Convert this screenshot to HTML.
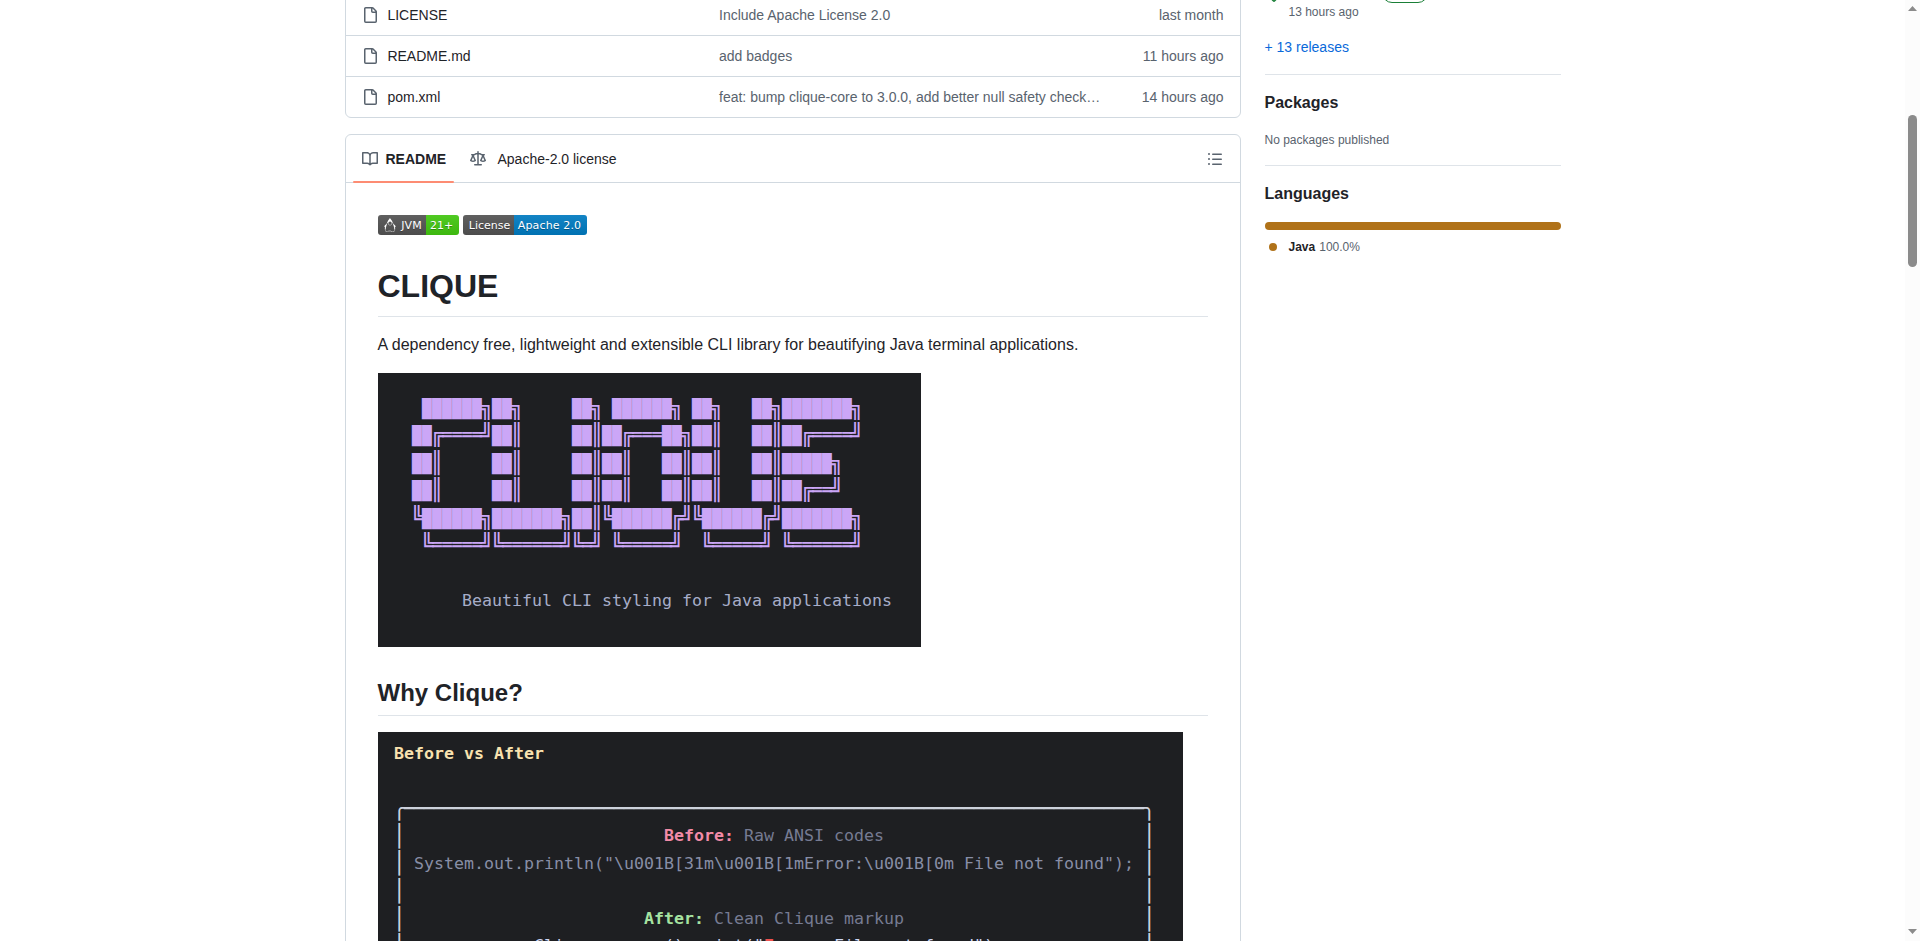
<!DOCTYPE html>
<html lang="en">
<head>
<meta charset="utf-8">
<title>clique</title>
<style>
html,body{margin:0;padding:0;background:#fff;overflow:hidden;}
body{width:1920px;height:941px;position:relative;font-family:"Liberation Sans",sans-serif;font-size:14px;color:#1f2328;line-height:20px;}
.abs{position:absolute;}
.muted{color:#59636e;}
/* file list */
#files{left:345px;top:-7px;width:894px;height:123px;border:1px solid #d1d9e0;border-radius:0 0 6px 6px;box-sizing:content-box;}
.frow{position:absolute;left:0;width:894px;height:40px;border-top:1px solid #d1d9e0;}
.frow svg{position:absolute;left:16px;top:12px;fill:#59636e;}
.frow .fn{position:absolute;left:41.4px;top:10px;white-space:nowrap;}
.frow .cm{position:absolute;left:373px;top:10px;color:#59636e;white-space:nowrap;}
.frow .dt{position:absolute;right:16.5px;top:10px;color:#59636e;white-space:nowrap;}
/* readme box */
#readme{left:345px;top:134px;width:894px;height:900px;border:1px solid #d1d9e0;border-radius:6px 6px 0 0;}
#rhead{left:0;top:0;width:894px;height:47px;border-bottom:1px solid #d1d9e0;}
.tab{position:absolute;top:14px;white-space:nowrap;font-size:14px;line-height:20px;}
h1,h2,p{margin:0;}
.badge{height:20px;border-radius:3px;overflow:hidden;font-family:"DejaVu Sans",sans-serif;font-size:11px;line-height:20px;color:#fff;}
.badge .bl{position:absolute;top:0;height:20px;}
.badge .sh{background:linear-gradient(rgba(187,187,187,.1),rgba(0,0,0,.1));}
.badge .bt{position:absolute;top:1px;text-align:center;white-space:nowrap;text-shadow:0 1px 0 rgba(1,1,1,.3);}
</style>
</head>
<body>
<!-- file list -->
<div id="files" class="abs">
  <div class="frow" style="top:0px">
    <svg width="16" height="16" viewBox="0 0 16 16"><path d="M2 1.75C2 .784 2.784 0 3.75 0h6.586c.464 0 .909.184 1.237.513l2.914 2.914c.329.328.513.773.513 1.237v9.586A1.75 1.75 0 0 1 13.25 16h-9.5A1.75 1.75 0 0 1 2 14.25Zm1.75-.25a.25.25 0 0 0-.25.25v12.5c0 .138.112.25.25.25h9.5a.25.25 0 0 0 .25-.25V6h-2.75A1.75 1.75 0 0 1 9 4.25V1.5Zm6.75.062V4.25c0 .138.112.25.25.25h2.688l-.011-.013-2.914-2.914-.013-.011Z"/></svg>
    <span class="fn">LICENSE</span><span class="cm">Include Apache License 2.0</span><span class="dt">last month</span>
  </div>
  <div class="frow" style="top:41px">
    <svg width="16" height="16" viewBox="0 0 16 16"><path d="M2 1.75C2 .784 2.784 0 3.75 0h6.586c.464 0 .909.184 1.237.513l2.914 2.914c.329.328.513.773.513 1.237v9.586A1.75 1.75 0 0 1 13.25 16h-9.5A1.75 1.75 0 0 1 2 14.25Zm1.75-.25a.25.25 0 0 0-.25.25v12.5c0 .138.112.25.25.25h9.5a.25.25 0 0 0 .25-.25V6h-2.75A1.75 1.75 0 0 1 9 4.25V1.5Zm6.75.062V4.25c0 .138.112.25.25.25h2.688l-.011-.013-2.914-2.914-.013-.011Z"/></svg>
    <span class="fn">README.md</span><span class="cm">add badges</span><span class="dt">11 hours ago</span>
  </div>
  <div class="frow" style="top:82px">
    <svg width="16" height="16" viewBox="0 0 16 16"><path d="M2 1.75C2 .784 2.784 0 3.75 0h6.586c.464 0 .909.184 1.237.513l2.914 2.914c.329.328.513.773.513 1.237v9.586A1.75 1.75 0 0 1 13.25 16h-9.5A1.75 1.75 0 0 1 2 14.25Zm1.75-.25a.25.25 0 0 0-.25.25v12.5c0 .138.112.25.25.25h9.5a.25.25 0 0 0 .25-.25V6h-2.75A1.75 1.75 0 0 1 9 4.25V1.5Zm6.75.062V4.25c0 .138.112.25.25.25h2.688l-.011-.013-2.914-2.914-.013-.011Z"/></svg>
    <span class="fn">pom.xml</span><span class="cm">feat: bump clique-core to 3.0.0, add better null safety check…</span><span class="dt">14 hours ago</span>
  </div>
</div>

<!-- readme box -->
<div id="readme" class="abs">
  <div id="rhead" class="abs">
    <svg class="abs" style="left:16px;top:16px;fill:#59636e" width="16" height="16" viewBox="0 0 16 16"><path d="M0 1.75A.75.75 0 0 1 .75 1h4.253c1.227 0 2.317.59 3 1.501A3.743 3.743 0 0 1 11.006 1h4.245a.75.75 0 0 1 .75.75v10.5a.75.75 0 0 1-.75.75h-4.507a2.25 2.25 0 0 0-1.591.659l-.622.621a.75.75 0 0 1-1.06 0l-.622-.621A2.25 2.25 0 0 0 5.258 13H.75a.75.75 0 0 1-.75-.75Zm7.251 10.324.004-5.073-.002-2.253A2.25 2.25 0 0 0 5.003 2.5H1.5v9h3.757a3.75 3.75 0 0 1 1.994.574ZM8.755 4.75l-.004 7.322a3.752 3.752 0 0 1 1.992-.572H14.5v-9h-3.495a2.25 2.25 0 0 0-2.25 2.25Z"/></svg>
    <span class="tab" style="left:39.5px;font-weight:bold;">README</span>
    <div class="abs" style="left:7px;top:46px;width:101px;height:2px;background:#fd8c73;border-radius:1px;"></div>
    <svg class="abs" style="left:124px;top:16px;fill:#59636e" width="16" height="16" viewBox="0 0 16 16"><path d="M8.75.75V2h.985c.304 0 .603.08.867.231l1.29.736c.038.022.08.033.124.033h2.234a.75.75 0 0 1 0 1.500h-.427l2.111 4.692a.75.75 0 0 1-.154.838l-.53-.53.529.531-.001.002-.002.002-.006.006-.006.005-.01.01-.045.040c-.21.176-.441.327-.686.450C14.556 10.780 13.880 11 13 11a4.498 4.498 0 0 1-2.023-.454 3.544 3.544 0 0 1-.686-.450l-.045-.040-.016-.015-.006-.006-.004-.004v-.001a.75.75 0 0 1-.154-.838L12.178 4.500h-.162c-.305 0-.604-.079-.868-.231l-1.290-.736a.245.245 0 0 0-.124-.033H8.750V13h2.500a.75.75 0 0 1 0 1.500h-6.500a.75.75 0 0 1 0-1.500h2.500V3.500h-.984a.245.245 0 0 0-.124.033l-1.289.737c-.265.150-.564.230-.869.230h-.162l2.112 4.692a.75.75 0 0 1-.154.838l-.530-.530.529.531-.001.002-.002.002-.006.006-.016.015-.045.040c-.21.176-.441.327-.686.450C4.556 10.780 3.880 11 3 11a4.498 4.498 0 0 1-2.023-.454 3.544 3.544 0 0 1-.686-.450l-.045-.040-.016-.015-.006-.006-.004-.004v-.001a.75.75 0 0 1-.154-.838L2.178 4.500H1.750a.75.75 0 0 1 0-1.500h2.234a.249.249 0 0 0 .125-.033l1.288-.737c.265-.150.564-.230.869-.230h.984V.750a.75.75 0 0 1 1.500 0Zm2.945 8.477c.285.135.718.273 1.305.273s1.020-.138 1.305-.273L13 6.327Zm-10 0c.285.135.718.273 1.305.273s1.020-.138 1.305-.273L3 6.327Z"/></svg>
    <span class="tab" style="left:151.5px;">Apache-2.0 license</span>
    <svg class="abs" style="left:861px;top:16px;fill:#59636e" width="16" height="16" viewBox="0 0 16 16"><path d="M5.75 2.5h8.5a.75.75 0 0 1 0 1.5h-8.5a.75.75 0 0 1 0-1.5Zm0 5h8.5a.75.75 0 0 1 0 1.5h-8.5a.75.75 0 0 1 0-1.5Zm0 5h8.5a.75.75 0 0 1 0 1.5h-8.5a.75.75 0 0 1 0-1.5ZM2 14a1 1 0 1 1 0-2 1 1 0 0 1 0 2Zm1-6a1 1 0 1 1-2 0 1 1 0 0 1 2 0ZM2 4a1 1 0 1 1 0-2 1 1 0 0 1 0 2Z"/></svg>
  </div>
</div>

<!-- readme content (absolute page coords) -->
<h1 class="abs" style="left:377.5px;top:266px;font-size:32px;line-height:40px;font-weight:bold;white-space:nowrap;">CLIQUE</h1>
<div class="abs" style="left:378px;top:316px;width:830px;height:1px;background:#d1d9e0b3;"></div>
<p class="abs" style="left:377.5px;top:333px;font-size:16px;line-height:24px;white-space:nowrap;">A dependency free, lightweight and extensible CLI library for beautifying Java terminal applications.</p>
<h2 class="abs" style="left:377.5px;top:678px;font-size:24px;line-height:30px;font-weight:bold;white-space:nowrap;">Why Clique?</h2>
<div class="abs" style="left:378px;top:715px;width:830px;height:1px;background:#d1d9e0b3;"></div>

<!-- sidebar -->
<svg class="abs" style="left:1265px;top:-14px;fill:#1a7f37" width="16" height="16" viewBox="0 0 16 16"><path d="M1 7.775V2.75C1 1.784 1.784 1 2.75 1h5.025c.464 0 .910.184 1.238.513l6.250 6.250a1.750 1.750 0 0 1 0 2.474l-5.026 5.026a1.750 1.750 0 0 1-2.474 0l-6.250-6.250A1.752 1.752 0 0 1 1 7.775Zm1.500 0c0 .066.026.130.073.177l6.250 6.250a.250.250 0 0 0 .354 0l5.025-5.025a.250.250 0 0 0 0-.354l-6.250-6.250a.250.250 0 0 0-.177-.073H2.750a.250.250 0 0 0-.250.250ZM6 5a1 1 0 1 1 0 2 1 1 0 0 1 0-2Z"/></svg>
<div class="abs" style="left:1382px;top:-18px;width:44px;height:19px;border:1px solid #1a7f37;border-radius:10px;"></div>
<div class="abs muted" style="left:1288.5px;top:3px;font-size:12px;line-height:18px;white-space:nowrap;">13 hours ago</div>
<div class="abs" style="left:1264.5px;top:37px;font-size:14px;line-height:20px;color:#0969da;white-space:nowrap;">+ 13 releases</div>
<div class="abs" style="left:1265px;top:74px;width:296px;height:1px;background:#d1d9e0b3;"></div>
<div class="abs" style="left:1264.5px;top:91px;font-size:16px;line-height:24px;font-weight:bold;white-space:nowrap;">Packages</div>
<div class="abs muted" style="left:1264.5px;top:131px;font-size:12px;line-height:18px;white-space:nowrap;">No packages published</div>
<div class="abs" style="left:1265px;top:165px;width:296px;height:1px;background:#d1d9e0b3;"></div>
<div class="abs" style="left:1264.5px;top:182px;font-size:16px;line-height:24px;font-weight:bold;white-space:nowrap;">Languages</div>
<div class="abs" style="left:1265px;top:222px;width:296px;height:8px;background:#b07219;border-radius:6px;"></div>
<div class="abs" style="left:1269px;top:243px;width:8px;height:8px;background:#b07219;border-radius:50%;"></div>
<div class="abs" style="left:1288.5px;top:238px;font-size:12px;line-height:18px;white-space:nowrap;"><b style="margin-right:4px">Java</b><span class="muted">100.0%</span></div>

<!-- scrollbar -->
<div class="abs" style="left:1905px;top:0;width:15px;height:941px;background:#fcfcfc;"></div>
<div class="abs" style="left:1908px;top:115px;width:9px;height:152px;background:#8b8b8b;border-radius:4.5px;"></div>
<svg class="abs" style="left:1905px;top:0" width="15" height="941" viewBox="0 0 15 941"><path d="M3 11 L7.5 6 L12 11Z M3 929 L7.5 934 L12 929Z" fill="#8b8b8b"/></svg>
<!-- badges -->
<div class="abs badge" style="left:378px;top:215px;width:81px;">
  <span class="bl" style="left:0;width:48px;background:#555"></span><span class="bl" style="left:48px;width:33px;background:#4c1"></span><span class="bl sh" style="left:0;width:81px;"></span>
  <svg class="abs" style="left:5px;top:3px;fill:#fff" width="14" height="14" viewBox="0 0 24 24"><path d="M11.915 0 11.7.215C9.515 2.4 7.47 6.39 6.046 10.483c-1.064 1.024-3.633 2.81-3.711 3.551-.093.87 1.746 2.611 1.55 3.235-.198.625-1.304 1.408-1.014 1.939.1.188.823.011 1.277-.491a13.389 13.389 0 0 0-.017 2.14c.076.906.27 1.668.643 2.232.372.563.956.911 1.667.911.397 0 .727-.114 1.024-.264.298-.149.571-.33.91-.5.68-.34 1.634-.666 3.53-.604 1.903.062 2.872.39 3.559.704.687.314 1.15.664 1.925.664.767 0 1.395-.336 1.807-.9.412-.563.631-1.33.72-2.24.06-.623.055-1.32 0-2.066.454.45 1.117.604 1.213.424.29-.53-.816-1.314-1.013-1.937-.198-.624 1.642-2.366 1.549-3.236-.08-.748-2.707-2.568-3.748-3.586C16.428 6.374 14.308 2.394 12.13.215zm.175 6.038a2.95 2.95 0 0 1 2.943 2.942 2.95 2.95 0 0 1-2.943 2.943A2.95 2.95 0 0 1 9.148 8.98a2.95 2.95 0 0 1 2.942-2.942zM8.685 7.983a3.515 3.515 0 0 0-.145.997c0 1.951 1.6 3.55 3.55 3.55 1.95 0 3.55-1.598 3.55-3.55 0-.329-.046-.648-.132-.951.334.095.64.208.915.336a42.699 42.699 0 0 1 2.042 5.829c.678 2.545 1.01 4.92.846 6.607-.082.844-.29 1.51-.606 1.94-.315.431-.713.651-1.315.651-.593 0-.932-.27-1.673-.61-.741-.338-1.825-.694-3.792-.758-1.974-.064-3.073.293-3.821.669-.375.188-.659.373-.911.5s-.466.2-.752.2c-.53 0-.878-.216-1.16-.643-.281-.427-.469-1.08-.539-1.903-.14-1.646.177-3.955.84-6.545a43.35 43.35 0 0 1 1.987-5.844c.31-.176.681-.336 1.116-.475z"/></svg>
  <span class="bt" style="left:22px;width:23px;">JVM</span><span class="bt" style="left:47px;width:33px;">21+</span>
</div>
<div class="abs badge" style="left:463px;top:215px;width:124px;">
  <span class="bl" style="left:0;width:51px;background:#555"></span><span class="bl" style="left:51px;width:73px;background:#007ec6"></span><span class="bl sh" style="left:0;width:124px;"></span>
  <span class="bt" style="left:0;width:53px;">License</span><span class="bt" style="left:51px;width:71px;letter-spacing:.13px;">Apache 2.0</span>
</div>
<svg class="abs" style="left:378px;top:373px" width="543" height="274" viewBox="0 0 543 274">
<rect width="543" height="274" fill="#1e1f22"/>
<g font-family="'DejaVu Sans Mono','Liberation Mono',monospace" fill="#cba6f7" xml:space="preserve">
<text transform="translate(0,35.40) scale(1,1.1092)" x="43.91 53.91 63.91 73.91 83.91 93.91" y="5.534" font-size="16.088">██████</text>
<text transform="translate(0,35.40) scale(1,1.1092)" x="113.91 123.91" y="5.534" font-size="16.088">██</text>
<text transform="translate(0,35.40) scale(1,1.1092)" x="193.91 203.91" y="5.534" font-size="16.088">██</text>
<text transform="translate(0,35.40) scale(1,1.1092)" x="233.91 243.91 253.91 263.91 273.91 283.91" y="5.534" font-size="16.088">██████</text>
<text transform="translate(0,35.40) scale(1,1.1092)" x="313.91 323.91" y="5.534" font-size="16.088">██</text>
<text transform="translate(0,35.40) scale(1,1.1092)" x="373.91 383.91" y="5.534" font-size="16.088">██</text>
<text transform="translate(0,35.40) scale(1,1.1092)" x="403.91 413.91 423.91 433.91 443.91 453.91 463.91" y="5.534" font-size="16.088">███████</text>
<text transform="translate(0,34.30) scale(1,0.9428)" x="102.00" y="7.771" font-size="22.589">╗</text>
<text transform="translate(0,34.30) scale(1,0.9428)" x="132.00" y="7.771" font-size="22.589">╗</text>
<text transform="translate(0,34.30) scale(1,0.9428)" x="212.00" y="7.771" font-size="22.589">╗</text>
<text transform="translate(0,34.30) scale(1,0.9428)" x="292.00" y="7.771" font-size="22.589">╗</text>
<text transform="translate(0,34.30) scale(1,0.9428)" x="332.00" y="7.771" font-size="22.589">╗</text>
<text transform="translate(0,34.30) scale(1,0.9428)" x="392.00" y="7.771" font-size="22.589">╗</text>
<text transform="translate(0,34.30) scale(1,0.9428)" x="472.00" y="7.771" font-size="22.589">╗</text>
<text transform="translate(0,62.40) scale(1,1.1092)" x="33.91 43.91" y="5.534" font-size="16.088">██</text>
<text transform="translate(0,62.40) scale(1,1.1092)" x="113.91 123.91" y="5.534" font-size="16.088">██</text>
<text transform="translate(0,62.40) scale(1,1.1092)" x="193.91 203.91" y="5.534" font-size="16.088">██</text>
<text transform="translate(0,62.40) scale(1,1.1092)" x="223.91 233.91" y="5.534" font-size="16.088">██</text>
<text transform="translate(0,62.40) scale(1,1.1092)" x="283.91 293.91" y="5.534" font-size="16.088">██</text>
<text transform="translate(0,62.40) scale(1,1.1092)" x="313.91 323.91" y="5.534" font-size="16.088">██</text>
<text transform="translate(0,62.40) scale(1,1.1092)" x="373.91 383.91" y="5.534" font-size="16.088">██</text>
<text transform="translate(0,62.40) scale(1,1.1092)" x="403.91 413.91" y="5.534" font-size="16.088">██</text>
<text transform="translate(0,61.30) scale(0.71219,0.9428)" x="90.084 104.125 118.167 132.208" y="7.771" font-size="22.589">════</text>
<text transform="translate(0,61.30) scale(0.71219,0.9428)" x="356.867 370.908 384.949" y="7.771" font-size="22.589">═══</text>
<text transform="translate(0,61.30) scale(0.71219,0.9428)" x="609.609 623.650 637.691 651.732" y="7.771" font-size="22.589">════</text>
<text transform="translate(0,61.30) scale(1,0.9428)" x="52.00" y="7.771" font-size="22.589">╔</text>
<text transform="translate(0,61.30) scale(1,0.9428)" x="102.00" y="7.771" font-size="22.589">╝</text>
<text transform="translate(0,61.30) scale(1,0.9428)" x="132.00" y="7.771" font-size="22.589">║</text>
<text transform="translate(0,61.30) scale(1,0.9428)" x="212.00" y="7.771" font-size="22.589">║</text>
<text transform="translate(0,61.30) scale(1,0.9428)" x="242.00" y="7.771" font-size="22.589">╔</text>
<text transform="translate(0,61.30) scale(1,0.9428)" x="302.00" y="7.771" font-size="22.589">╗</text>
<text transform="translate(0,61.30) scale(1,0.9428)" x="332.00" y="7.771" font-size="22.589">║</text>
<text transform="translate(0,61.30) scale(1,0.9428)" x="392.00" y="7.771" font-size="22.589">║</text>
<text transform="translate(0,61.30) scale(1,0.9428)" x="422.00" y="7.771" font-size="22.589">╔</text>
<text transform="translate(0,61.30) scale(1,0.9428)" x="472.00" y="7.771" font-size="22.589">╝</text>
<text transform="translate(0,90.40) scale(1,1.1092)" x="33.91 43.91" y="5.534" font-size="16.088">██</text>
<text transform="translate(0,90.40) scale(1,1.1092)" x="113.91 123.91" y="5.534" font-size="16.088">██</text>
<text transform="translate(0,90.40) scale(1,1.1092)" x="193.91 203.91" y="5.534" font-size="16.088">██</text>
<text transform="translate(0,90.40) scale(1,1.1092)" x="223.91 233.91" y="5.534" font-size="16.088">██</text>
<text transform="translate(0,90.40) scale(1,1.1092)" x="283.91 293.91" y="5.534" font-size="16.088">██</text>
<text transform="translate(0,90.40) scale(1,1.1092)" x="313.91 323.91" y="5.534" font-size="16.088">██</text>
<text transform="translate(0,90.40) scale(1,1.1092)" x="373.91 383.91" y="5.534" font-size="16.088">██</text>
<text transform="translate(0,90.40) scale(1,1.1092)" x="403.91 413.91 423.91 433.91 443.91" y="5.534" font-size="16.088">█████</text>
<text transform="translate(0,89.30) scale(1,0.9428)" x="52.00" y="7.771" font-size="22.589">║</text>
<text transform="translate(0,89.30) scale(1,0.9428)" x="132.00" y="7.771" font-size="22.589">║</text>
<text transform="translate(0,89.30) scale(1,0.9428)" x="212.00" y="7.771" font-size="22.589">║</text>
<text transform="translate(0,89.30) scale(1,0.9428)" x="242.00" y="7.771" font-size="22.589">║</text>
<text transform="translate(0,89.30) scale(1,0.9428)" x="302.00" y="7.771" font-size="22.589">║</text>
<text transform="translate(0,89.30) scale(1,0.9428)" x="332.00" y="7.771" font-size="22.589">║</text>
<text transform="translate(0,89.30) scale(1,0.9428)" x="392.00" y="7.771" font-size="22.589">║</text>
<text transform="translate(0,89.30) scale(1,0.9428)" x="452.00" y="7.771" font-size="22.589">╗</text>
<text transform="translate(0,117.40) scale(1,1.1092)" x="33.91 43.91" y="5.534" font-size="16.088">██</text>
<text transform="translate(0,117.40) scale(1,1.1092)" x="113.91 123.91" y="5.534" font-size="16.088">██</text>
<text transform="translate(0,117.40) scale(1,1.1092)" x="193.91 203.91" y="5.534" font-size="16.088">██</text>
<text transform="translate(0,117.40) scale(1,1.1092)" x="223.91 233.91" y="5.534" font-size="16.088">██</text>
<text transform="translate(0,117.40) scale(1,1.1092)" x="283.91 293.91" y="5.534" font-size="16.088">██</text>
<text transform="translate(0,117.40) scale(1,1.1092)" x="313.91 323.91" y="5.534" font-size="16.088">██</text>
<text transform="translate(0,117.40) scale(1,1.1092)" x="373.91 383.91" y="5.534" font-size="16.088">██</text>
<text transform="translate(0,117.40) scale(1,1.1092)" x="403.91 413.91" y="5.534" font-size="16.088">██</text>
<text transform="translate(0,116.30) scale(0.71219,0.9428)" x="609.609 623.650" y="7.771" font-size="22.589">══</text>
<text transform="translate(0,116.30) scale(1,0.9428)" x="52.00" y="7.771" font-size="22.589">║</text>
<text transform="translate(0,116.30) scale(1,0.9428)" x="132.00" y="7.771" font-size="22.589">║</text>
<text transform="translate(0,116.30) scale(1,0.9428)" x="212.00" y="7.771" font-size="22.589">║</text>
<text transform="translate(0,116.30) scale(1,0.9428)" x="242.00" y="7.771" font-size="22.589">║</text>
<text transform="translate(0,116.30) scale(1,0.9428)" x="302.00" y="7.771" font-size="22.589">║</text>
<text transform="translate(0,116.30) scale(1,0.9428)" x="332.00" y="7.771" font-size="22.589">║</text>
<text transform="translate(0,116.30) scale(1,0.9428)" x="392.00" y="7.771" font-size="22.589">║</text>
<text transform="translate(0,116.30) scale(1,0.9428)" x="422.00" y="7.771" font-size="22.589">╔</text>
<text transform="translate(0,116.30) scale(1,0.9428)" x="452.00" y="7.771" font-size="22.589">╝</text>
<text transform="translate(0,145.40) scale(1,1.1092)" x="43.91 53.91 63.91 73.91 83.91 93.91" y="5.534" font-size="16.088">██████</text>
<text transform="translate(0,145.40) scale(1,1.1092)" x="113.91 123.91 133.91 143.91 153.91 163.91 173.91" y="5.534" font-size="16.088">███████</text>
<text transform="translate(0,145.40) scale(1,1.1092)" x="193.91 203.91" y="5.534" font-size="16.088">██</text>
<text transform="translate(0,145.40) scale(1,1.1092)" x="233.91 243.91 253.91 263.91 273.91 283.91" y="5.534" font-size="16.088">██████</text>
<text transform="translate(0,145.40) scale(1,1.1092)" x="323.91 333.91 343.91 353.91 363.91 373.91" y="5.534" font-size="16.088">██████</text>
<text transform="translate(0,145.40) scale(1,1.1092)" x="403.91 413.91 423.91 433.91 443.91 453.91 463.91" y="5.534" font-size="16.088">███████</text>
<text transform="translate(0,144.30) scale(1,0.9428)" x="32.00" y="7.771" font-size="22.589">╚</text>
<text transform="translate(0,144.30) scale(1,0.9428)" x="102.00" y="7.771" font-size="22.589">╗</text>
<text transform="translate(0,144.30) scale(1,0.9428)" x="182.00" y="7.771" font-size="22.589">╗</text>
<text transform="translate(0,144.30) scale(1,0.9428)" x="212.00 222.00" y="7.771" font-size="22.589">║╚</text>
<text transform="translate(0,144.30) scale(1,0.9428)" x="292.00 302.00 312.00" y="7.771" font-size="22.589">╔╝╚</text>
<text transform="translate(0,144.30) scale(1,0.9428)" x="382.00 392.00" y="7.771" font-size="22.589">╔╝</text>
<text transform="translate(0,144.30) scale(1,0.9428)" x="472.00" y="7.771" font-size="22.589">╗</text>
<text transform="translate(0,171.30) scale(0.71219,0.9428)" x="76.043 90.084 104.125 118.167 132.208" y="7.771" font-size="22.589">═════</text>
<text transform="translate(0,171.30) scale(0.71219,0.9428)" x="174.331 188.373 202.414 216.455 230.496 244.537" y="7.771" font-size="22.589">══════</text>
<text transform="translate(0,171.30) scale(0.71219,0.9428)" x="286.661" y="7.771" font-size="22.589">═</text>
<text transform="translate(0,171.30) scale(0.71219,0.9428)" x="342.826 356.867 370.908 384.949 398.991" y="7.771" font-size="22.589">═════</text>
<text transform="translate(0,171.30) scale(0.71219,0.9428)" x="469.197 483.238 497.279 511.320 525.361" y="7.771" font-size="22.589">═════</text>
<text transform="translate(0,171.30) scale(0.71219,0.9428)" x="581.526 595.567 609.609 623.650 637.691 651.732" y="7.771" font-size="22.589">══════</text>
<text transform="translate(0,171.30) scale(1,0.9428)" x="42.00" y="7.771" font-size="22.589">╚</text>
<text transform="translate(0,171.30) scale(1,0.9428)" x="102.00 112.00" y="7.771" font-size="22.589">╝╚</text>
<text transform="translate(0,171.30) scale(1,0.9428)" x="182.00 192.00" y="7.771" font-size="22.589">╝╚</text>
<text transform="translate(0,171.30) scale(1,0.9428)" x="212.00" y="7.771" font-size="22.589">╝</text>
<text transform="translate(0,171.30) scale(1,0.9428)" x="232.00" y="7.771" font-size="22.589">╚</text>
<text transform="translate(0,171.30) scale(1,0.9428)" x="292.00" y="7.771" font-size="22.589">╝</text>
<text transform="translate(0,171.30) scale(1,0.9428)" x="322.00" y="7.771" font-size="22.589">╚</text>
<text transform="translate(0,171.30) scale(1,0.9428)" x="382.00" y="7.771" font-size="22.589">╝</text>
<text transform="translate(0,171.30) scale(1,0.9428)" x="402.00" y="7.771" font-size="22.589">╚</text>
<text transform="translate(0,171.30) scale(1,0.9428)" x="472.00" y="7.771" font-size="22.589">╝</text>
</g>
<text x="84" y="232.9" font-family="'DejaVu Sans Mono','Liberation Mono',monospace" font-size="16.610" fill="#a6adc8" textLength="430" lengthAdjust="spacing" xml:space="preserve">Beautiful CLI styling for Java applications</text>
</svg>
<svg class="abs" style="left:378px;top:732px" width="805" height="260" viewBox="0 0 805 260">
<rect width="805" height="260" fill="#1e1f22"/>
<g font-family="'DejaVu Sans Mono','Liberation Mono',monospace" font-size="16.610" xml:space="preserve">
<text x="16 26 36 46 56 66 76 86 96 106 116 126 136 146 156" y="27"><tspan fill="#f9e2af" font-weight="bold">Before vs After</tspan></text>
<text x="286 296 306 316 326 336 346 356 366 376 386 396 406 416 426 436 446 456 466 476 486 496" y="109"><tspan fill="#f38ba8" font-weight="bold">Before:</tspan><tspan fill="#767b92"> Raw ANSI codes</tspan></text>
<text x="36 46 56 66 76 86 96 106 116 126 136 146 156 166 176 186 196 206 216 226 236 246 256 266 276 286 296 306 316 326 336 346 356 366 376 386 396 406 416 426 436 446 456 466 476 486 496 506 516 526 536 546 556 566 576 586 596 606 616 626 636 646 656 666 676 686 696 706 716 726 736 746" y="137"><tspan fill="#888ea6">System.out.println("\u001B[31m\u001B[1mError:\u001B[0m File not found");</tspan></text>
<text x="266 276 286 296 306 316 326 336 346 356 366 376 386 396 406 416 426 436 446 456 466 476 486 496 506 516" y="192"><tspan fill="#a6e3a1" font-weight="bold">After:</tspan><tspan fill="#767b92"> Clean Clique markup</tspan></text>
<text x="156 166 176 186 196 206 216 226 236 246 256 266 276 286 296 306 316 326 336 346 356 366 376 386 396 406 416 426 436 446 456 466 476 486 496 506 516 526 536 546 556 566 576 586 596 606 616" y="219"><tspan fill="#cdd6f4">Clique.parser().print("</tspan><tspan fill="#f0524f" font-weight="bold">Error:</tspan><tspan fill="#cdd6f4"> File not found");</tspan></text>
</g>
<g font-family="'DejaVu Sans Mono','Liberation Mono',monospace" font-size="22.589" fill="#cdd1dc" xml:space="preserve">
<text transform="translate(0,76.00) scale(0.75492,1.1492)" x="34.264 47.510 60.757 74.003 87.250 100.496 113.742 126.989 140.235 153.482 166.728 179.974 193.221 206.467 219.714 232.960 246.207 259.453 272.699 285.946 299.192 312.439 325.685 338.931 352.178 365.424 378.671 391.917 405.164 418.410 431.656 444.903 458.149 471.396 484.642 497.888 511.135 524.381 537.628 550.874 564.121 577.367 590.613 603.860 617.106 630.353 643.599 656.845 670.092 683.338 696.585 709.831 723.077 736.324 749.570 762.817 776.063 789.310 802.556 815.802 829.049 842.295 855.542 868.788 882.034 895.281 908.527 921.774 935.020 948.267 961.513 974.759 988.006 1001.252" y="7.771">──────────────────────────────────────────────────────────────────────────</text>
<text transform="translate(0,75.50) scale(1,0.9577)" x="14.20" y="7.771">╭</text>
<text transform="translate(0,75.50) scale(1,0.9577)" x="764.20" y="7.771">╮</text>
<text transform="translate(0,103.40) scale(1,0.9577)" x="14.20" y="7.771">│</text>
<text transform="translate(0,103.40) scale(1,0.9577)" x="764.20" y="7.771">│</text>
<text transform="translate(0,131.00) scale(1,0.9577)" x="14.20" y="7.771">│</text>
<text transform="translate(0,131.00) scale(1,0.9577)" x="764.20" y="7.771">│</text>
<text transform="translate(0,158.60) scale(1,0.9577)" x="14.20" y="7.771">│</text>
<text transform="translate(0,158.60) scale(1,0.9577)" x="764.20" y="7.771">│</text>
<text transform="translate(0,186.20) scale(1,0.9577)" x="14.20" y="7.771">│</text>
<text transform="translate(0,186.20) scale(1,0.9577)" x="764.20" y="7.771">│</text>
<text transform="translate(0,213.80) scale(1,0.9577)" x="14.20" y="7.771">│</text>
<text transform="translate(0,213.80) scale(1,0.9577)" x="764.20" y="7.771">│</text>
<text transform="translate(0,241.40) scale(1,0.9577)" x="14.20" y="7.771">│</text>
<text transform="translate(0,241.40) scale(1,0.9577)" x="764.20" y="7.771">│</text>
</g>
</svg>
</body>
</html>
